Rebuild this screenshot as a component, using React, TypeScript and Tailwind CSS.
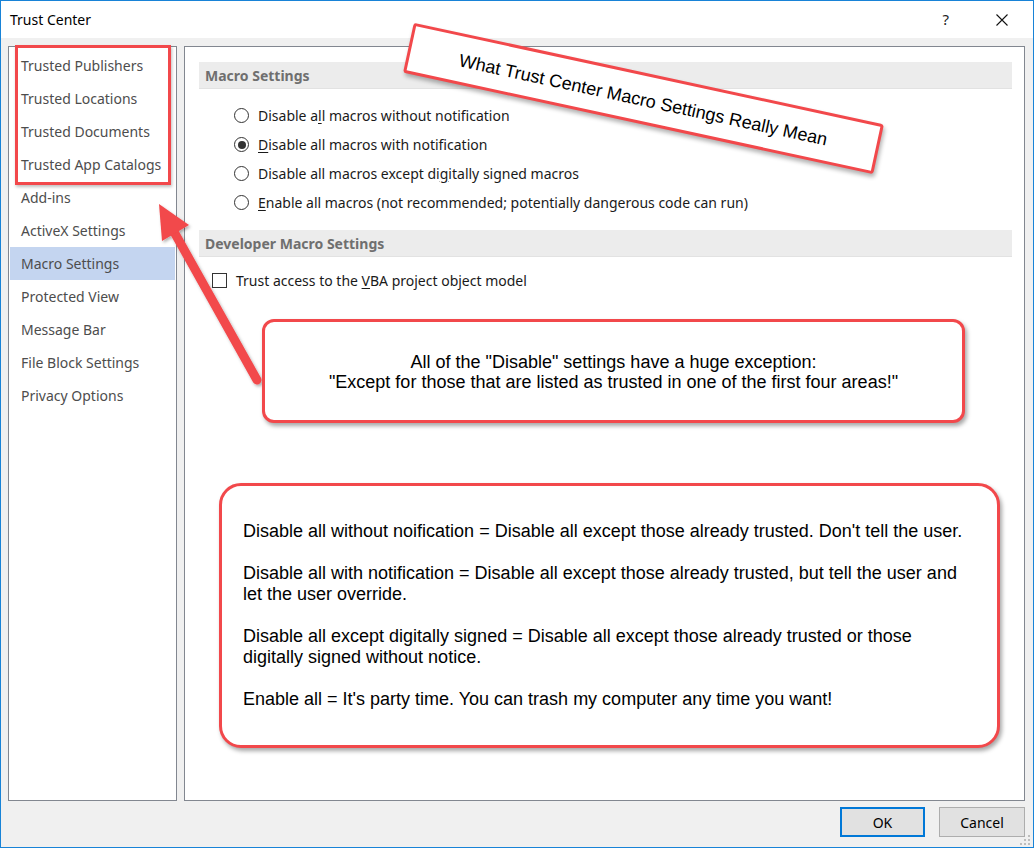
import React from "react";

const ui = { fontFamily: '"Noto Sans", "Open Sans", sans-serif' };
const arial = { fontFamily: '"Liberation Sans", Arial, sans-serif' };

const navItems = [
  "Trusted Publishers",
  "Trusted Locations",
  "Trusted Documents",
  "Trusted App Catalogs",
  "Add-ins",
  "ActiveX Settings",
  "Macro Settings",
  "Protected View",
  "Message Bar",
  "File Block Settings",
  "Privacy Options",
];

function Radio({ checked, children }: { checked?: boolean; children: React.ReactNode }) {
  return (
    <div className="flex items-center h-[29px]">
      <span className="w-[15px] h-[15px] rounded-full border border-[#333333] bg-white flex items-center justify-center">
        {checked && <span className="w-[8px] h-[8px] rounded-full bg-[#333333]" />}
      </span>
      <span className="ml-[9px] text-[14px] text-[#1a1a1a]">{children}</span>
    </div>
  );
}

function SectionHeader({ children }: { children: React.ReactNode }) {
  return (
    <div className="h-[27px] bg-[#ececec] border-b border-[#e2e2e2] flex items-center px-[6px] text-[14px] font-bold text-[#6f6f6f]">
      {children}
    </div>
  );
}

export default function App() {
  return (
    <div
      className="relative w-[1034px] h-[848px] border border-[#1883d7] bg-[#f0f0f0] flex flex-col overflow-hidden"
      style={ui}
    >
      {/* Title bar */}
      <div className="h-[37px] bg-white flex items-center shrink-0">
        <span className="ml-[9px] text-[14px] text-black">Trust Center</span>
        <span className="ml-auto mr-[47px] text-[15px] text-[#222]">?</span>
        <svg width="12" height="12" viewBox="0 0 12 12" className="mr-[25px]">
          <path d="M0.5 0.5 L11.5 11.5 M11.5 0.5 L0.5 11.5" stroke="#111" strokeWidth="1.1" />
        </svg>
      </div>

      {/* Body */}
      <div className="flex pl-[7px] pr-[8px] pt-[8px] gap-[7px] shrink-0">
        {/* Left nav */}
        <div className="w-[169px] h-[755px] bg-white border border-[#828790] pt-[2px] px-[1px]">
          {navItems.map((n) => (
            <div
              key={n}
              className={
                "h-[33px] flex items-center pl-[11px] text-[14px] text-[#4d4d4d] " +
                (n === "Macro Settings" ? "bg-[#c4d5f0]" : "")
              }
            >
              {n}
            </div>
          ))}
        </div>

        {/* Right pane */}
        <div className="w-[841px] h-[755px] bg-white border border-[#828790] pt-[15px] pl-[14px] pr-[12px]">
          <SectionHeader>Macro Settings</SectionHeader>
          <div className="pl-[35px] pt-[12px] pb-[13px]">
            <Radio>
              Disable a<u className="underline-offset-2">l</u>l macros without notification
            </Radio>
            <Radio checked>
              <u className="underline-offset-2">D</u>isable all macros with notification
            </Radio>
            <Radio>
              Disable all macros except di<u className="underline-offset-2">g</u>itally signed macros
            </Radio>
            <Radio>
              <u className="underline-offset-2">E</u>nable all macros (not recommended; potentially dangerous code can run)
            </Radio>
          </div>
          <SectionHeader>Developer Macro Settings</SectionHeader>
          <div className="pl-[13px] pt-[12px] flex items-center h-[34px]">
            <span className="w-[15px] h-[15px] border border-[#333333] bg-white" />
            <span className="ml-[9px] text-[14px] text-[#1a1a1a]">
              Trust access to the <u className="underline-offset-2">V</u>BA project object model
            </span>
          </div>
        </div>
      </div>

      {/* Buttons */}
      <div className="flex justify-end gap-[14px] pr-[8px] mt-[6px]">
        <button className="w-[85px] h-[30px] bg-[#e1e1e1] border-2 border-[#0078d7] text-[14px] text-black">
          OK
        </button>
        <button className="w-[86px] h-[30px] bg-[#e1e1e1] border border-[#adadad] text-[14px] text-black">
          Cancel
        </button>
      </div>

      {/* Resize grip */}
      <svg className="absolute right-[2px] bottom-[1px]" width="11" height="11" viewBox="0 0 11 11">
        <rect x="8" y="0" width="2" height="2" fill="#bdbdbd" />
        <rect x="4" y="4" width="2" height="2" fill="#bdbdbd" />
        <rect x="8" y="4" width="2" height="2" fill="#bdbdbd" />
        <rect x="0" y="8" width="2" height="2" fill="#bdbdbd" />
        <rect x="4" y="8" width="2" height="2" fill="#bdbdbd" />
        <rect x="8" y="8" width="2" height="2" fill="#bdbdbd" />
      </svg>

      {/* Red highlight box around trusted areas */}
      <div className="absolute left-[14px] top-[44px] w-[156px] h-[140px] border-[3px] border-[#f2484b] shadow-[1px_2px_3px_rgba(0,0,0,0.25)]" />

      {/* Arrow */}
      <svg className="absolute left-0 top-0 pointer-events-none" width="1034" height="848">
        <defs>
          <filter id="sh" x="-20%" y="-20%" width="140%" height="140%">
            <feDropShadow dx="1.5" dy="2" stdDeviation="1.5" floodColor="#000" floodOpacity="0.3" />
          </filter>
        </defs>
        <g filter="url(#sh)">
          <line x1="256" y1="379" x2="172" y2="229" stroke="#f2484b" strokeWidth="9" strokeLinecap="round" />
          <polygon points="158,203 188,224 161,240" fill="#f2484b" />
        </g>
      </svg>

      {/* Rotated title callout */}
      <div
        className="absolute left-[402px] top-[72px] w-[481px] h-[51px] bg-white border-[3px] border-[#f2484b] rounded-[3px] shadow-[2px_3px_4px_rgba(0,0,0,0.3)] flex items-center justify-center rotate-[12.2deg]"
      >
        <span className="text-[18px] text-black pt-[4px]" style={arial}>
          What Trust Center Macro Settings Really Mean
        </span>
      </div>

      {/* Exception callout */}
      <div
        className="absolute left-[261px] top-[318px] w-[703px] h-[104px] bg-white border-[3px] border-[#f2484b] rounded-[12px] shadow-[2px_3px_4px_rgba(0,0,0,0.35)] flex flex-col items-center justify-center text-[18px] leading-[20px] text-black"
        style={arial}
      >
        <div className="pt-[1px]">All of the "Disable" settings have a huge exception:</div>
        <div>"Except for those that are listed as trusted in one of the first four areas!"</div>
      </div>

      {/* Explanation callout */}
      <div
        className="absolute left-[218px] top-[482px] w-[781px] h-[265px] bg-white border-[3px] border-[#f2484b] rounded-[22px] shadow-[2px_3px_4px_rgba(0,0,0,0.35)] pl-[21px] pr-[10px] pt-[35px] text-[18px] leading-[21px] text-black"
        style={arial}
      >
        <p className="whitespace-nowrap">Disable all without noification = Disable all except those already trusted. Don't tell the user.</p>
        <p className="mt-[21px] whitespace-nowrap">
          Disable all with notification = Disable all except those already trusted, but tell the user and
          <br />
          let the user override.
        </p>
        <p className="mt-[21px] whitespace-nowrap">
          Disable all except digitally signed = Disable all except those already trusted or those
          <br />
          digitally signed without notice.
        </p>
        <p className="mt-[21px] whitespace-nowrap">Enable all = It's party time. You can trash my computer any time you want!</p>
      </div>
    </div>
  );
}
